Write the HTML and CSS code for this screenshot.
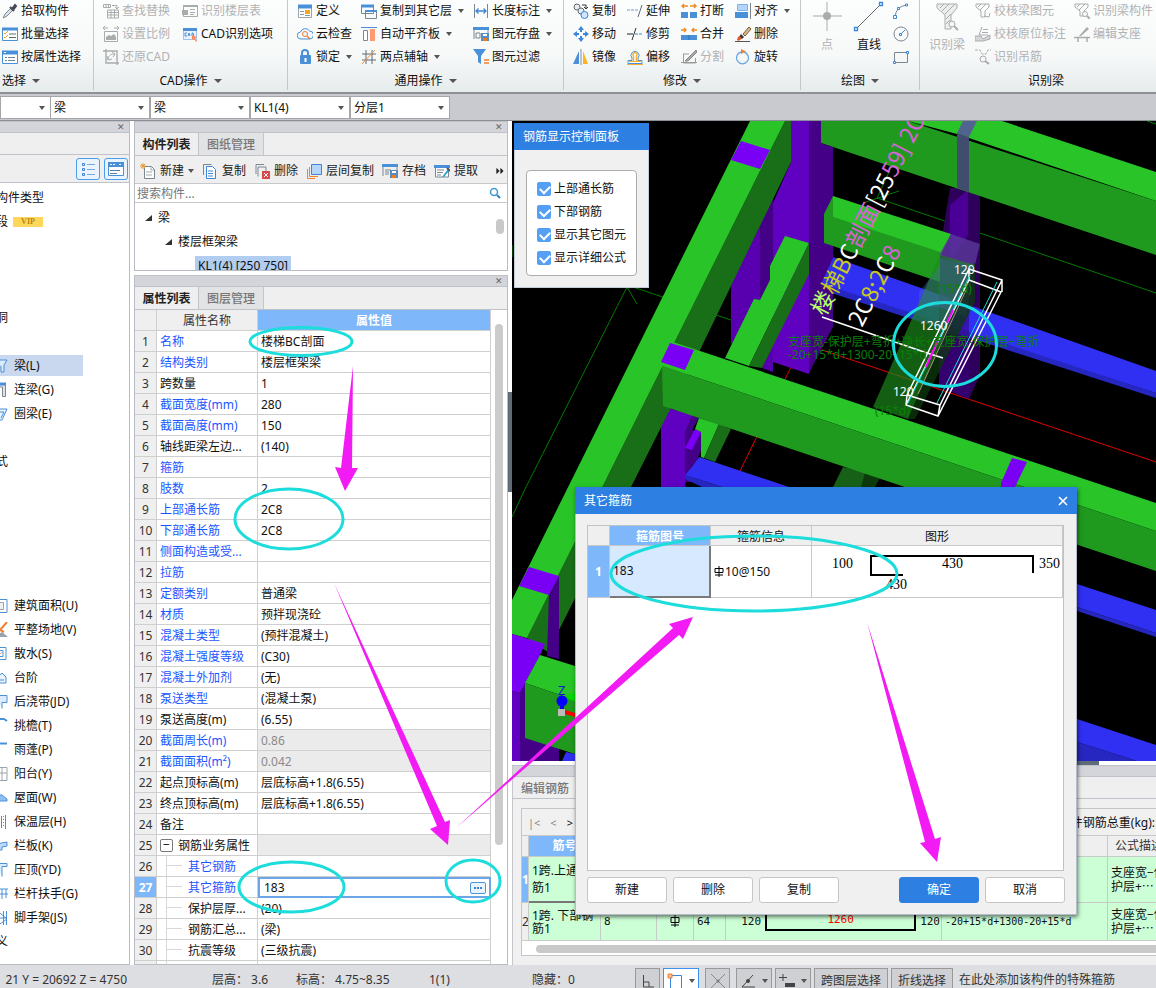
FILE: index.html
```html
<!DOCTYPE html>
<html lang="zh-CN">
<head>
<meta charset="utf-8">
<title>梁构件属性</title>
<link rel="stylesheet" href="styles.css">
</head>
<body>
<div class="app">
<header class="ribbon">
  <section class="group g-select">
    <div class="tools">
      <div class="col">
        <button class="tool"><svg viewBox="0 0 16 16"><path d="M1 15l2-4 6-6 2 2-6 6z" fill="#dce4ea" stroke="#7d8a94"/><path d="M8 4l4 4M10 6l3-4 1 1-3 4z" stroke="#444b52" stroke-width="2"/></svg>拾取构件</button>
        <button class="tool"><svg viewBox="0 0 16 16"><path d="M.5 3.500h15v11H.5z" fill="#fff" stroke="#4a90d9"/><path d="M0 3h16" stroke="#4a90d9" stroke-width="3"/><path d="M2 7l1 1 3-3M2 11l1 1 3-3" stroke="#f0a030" fill="none"/><path d="M7 8h7M7 11.500h7" stroke="#5f6b77"/></svg>批量选择</button>
        <button class="tool"><svg viewBox="0 0 16 16"><path d="M.5 2.500h15v12H.5z" fill="#fff" stroke="#4a90d9"/><path d="M0 3.500h16" stroke="#4a90d9" stroke-width="4"/><path d="M2 3l1 1 1-1" stroke="#fff"/><path d="M3 8.500h2M3 11.500h2M6 8.500h7M6 11.500h7" stroke="#6f8396"/></svg>按属性选择</button>
      </div>
    </div>
    <div class="caption">选择<i class="caret"></i></div>
  </section>
  <section class="group g-cad">
    <div class="tools">
      <div class="col">
        <button class="tool off" disabled><svg viewBox="0 0 16 16"><path d="M4.500 7v8h11V7zM4.500 9.500h11M4.500 12h11M8 7v8M11.500 7v8M9 2.500h5v3M12 4l2 2 2-2" fill="none" stroke="#a9abad"/><path d="M.5 1.500h7v3h-7zM3 1v4M5.500 1v4" fill="none" stroke="#a9abad"/></svg>查找替换</button>
        <button class="tool off" disabled><svg viewBox="0 0 16 16"><path d="M1.500 5.500h13v10h-13zM0 2h5M11 2h5M2 0L0 2l2 2M14 0l2 2-2 2" fill="none" stroke="#a9abad"/><path d="M3 14v-3l3-2 2 1 3-2 2 3v3z" fill="#a9abad"/></svg>设置比例</button>
        <button class="tool off" disabled><svg viewBox="0 0 16 16"><path d="M3 0v14h13M0 2h14v14" fill="none" stroke="#a9abad" stroke-width="1.400"/><path d="M5 10c1-4 3-5 7-5M4 7l1 4 4-1M9 3l3 2-2 3" fill="none" stroke="#a9abad"/></svg>还原CAD</button>
      </div>
      <div class="col">
        <button class="tool off" disabled><svg viewBox="0 0 16 16"><path d="M1.500 2.500h14v11h-14z" fill="none" stroke="#a9abad"/><path d="M1 3h15" stroke="#a9abad" stroke-width="2"/><path d="M0 7h6v5H0z" fill="#a9abad"/><path d="M8 6.500h5M8 9.500h5M8 11.500h4" stroke="#a9abad"/></svg>识别楼层表</button>
        <button class="tool"><svg viewBox="0 0 16 16"><path d="M1.500 2.500h13v11h-13z" fill="#eaf3fd" stroke="#9cc3ee"/><path d="M1 3.500h14" stroke="#4a90d9" stroke-width="3"/><path d="M5 7H3v3h2M6 10l1-3 1 3M10 7v3h1l1-1-1-2z" fill="none" stroke="#4a90d9"/><path d="M10 9l5 2-2 1 2 3-1 1-2-3-2 1z" fill="#ff8a60"/></svg>CAD识别选项</button>
      </div>
    </div>
    <div class="caption">CAD操作<i class="caret"></i></div>
  </section>
  <section class="group g-common">
    <div class="tools">
      <div class="col">
        <button class="tool"><svg viewBox="0 0 16 16"><path d="M1.500 2.500h13v12h-13z" fill="#fff" stroke="#98a4ae"/><path d="M1 3.500h14" stroke="#4a90d9" stroke-width="4"/><path d="M3 8.500h4M3 11.500h4M8 12.500h5" stroke="#8a98a5"/><path d="M8 7h5v4H8z" fill="#f5a623"/></svg>定义</button>
        <button class="tool"><svg viewBox="0 0 16 16"><path d="M4 13a3.500 3.500 0 0 1-.5-7 5 5 0 0 1 9-1 4 4 0 0 1 0 8z" fill="#f1f7ff" stroke="#4a90d9"/><circle cx="8" cy="8" r="2.500" fill="none" stroke="#f08030"/><path d="M10 10l3 3" stroke="#f08030" stroke-width="1.500"/></svg>云检查</button>
        <button class="tool"><svg viewBox="0 0 16 16"><path d="M5 7V4a3 3 0 0 1 6 0v3" fill="none" stroke="#4a90d9" stroke-width="2"/><rect x="3" y="6" width="11" height="9" rx="1" fill="#4a90d9"/><path d="M8.500 9v4" stroke="#fff" stroke-width="2"/></svg>锁定<i class="caret"></i></button>
      </div>
      <div class="col">
        <button class="tool"><svg viewBox="0 0 16 16"><path d="M.5 2.500h12v8H.5zM4.500 7.500h11v8h-11z" fill="#f7f9fb" stroke="#7a8793"/><path d="M0 3h13" stroke="#4a90d9" stroke-width="3"/><path d="M4 8h12" stroke="#4a90d9" stroke-width="2"/></svg>复制到其它层<i class="caret"></i></button>
        <button class="tool"><svg viewBox="0 0 16 16"><path d="M0 1.500h16" stroke="#4a90d9"/><path d="M2.500 4.500h4v10h-4z" fill="#fff" stroke="#7a8793"/><path d="M9 3h5v12H9z" fill="#ff9a70"/></svg>自动平齐板<i class="caret"></i></button>
        <button class="tool"><svg viewBox="0 0 16 16"><path d="M5 1v14M11 1v14M1 5h14M1 11h14" stroke="#5f6b77"/><path d="M1 15L14 1" stroke="#f09040"/></svg>两点辅轴<i class="caret"></i></button>
      </div>
      <div class="col">
        <button class="tool"><svg viewBox="0 0 16 16"><path d="M1.500 1v14M14.500 1v14" stroke="#7a8793"/><path d="M3 8h10M5.500 5.500L3 8l2.500 2.500M10.500 5.500L13 8l-2.500 2.500" fill="none" stroke="#3d85d8" stroke-width="1.300"/></svg>长度标注<i class="caret"></i></button>
        <button class="tool"><svg viewBox="0 0 16 16"><path d="M1 13V3h14v4M3 7h4v5H3z" fill="none" stroke="#7a8793"/><path d="M0 2.500h16" stroke="#4a90d9" stroke-width="3"/><path d="M8 7h8v8H8z" fill="#5b8cc0"/><path d="M10 8h4v2h-4z" fill="#fff"/><path d="M10 12h4v3h-4z" fill="#ef7b20"/></svg>图元存盘<i class="caret"></i></button>
        <button class="tool"><svg viewBox="0 0 16 16"><path d="M0 0h13L8 7v8l-3-2V7z" fill="#4a90d9"/><path d="M11 11h5M11 14h5" stroke="#f08030" stroke-width="1.300"/></svg>图元过滤</button>
      </div>
    </div>
    <div class="caption">通用操作<i class="caret"></i></div>
  </section>
  <section class="group g-modify">
    <div class="tools">
      <div class="col">
        <button class="tool"><svg viewBox="0 0 16 16"><circle cx="4" cy="4" r="3" fill="#e8edf1" stroke="#5f6b77"/><circle cx="8" cy="8" r="3" fill="#e8edf1" stroke="#5f6b77"/><circle cx="11.500" cy="12" r="3.500" fill="#cfe6ff" stroke="#3d85d8"/><path d="M9 2h4v4M11 4l2 2 2-2" fill="none" stroke="#333"/></svg>复制</button>
        <button class="tool"><svg viewBox="0 0 16 16"><path d="M8 0l3 4H5zM8 16l3-4H5zM0 8l4-3v6zM16 8l-4-3v6z" fill="#3d85d8"/><path d="M8 3v3M8 10v3M3 8h3M10 8h3" stroke="#3d85d8" stroke-width="2"/></svg>移动</button>
        <button class="tool"><svg viewBox="0 0 16 16"><path d="M6 2v13H0z" fill="#4a90d9"/><path d="M10 2v13h5z" fill="#f8b620"/><path d="M8 0v16" stroke="#8a8f94"/></svg>镜像</button>
      </div>
      <div class="col">
        <button class="tool"><svg viewBox="0 0 16 16"><path d="M0 7h11" stroke="#7a9cc8" stroke-dasharray="3 1"/><path d="M15 2l-4 12" stroke="#5f6b77"/></svg>延伸</button>
        <button class="tool"><svg viewBox="0 0 16 16"><path d="M0 8h6" stroke="#222"/><path d="M8 8h8" stroke="#3d85d8" stroke-dasharray="3 1"/><path d="M9 2L5 14" stroke="#333"/></svg>修剪</button>
        <button class="tool"><svg viewBox="0 0 16 16"><path d="M1 11.500h4V9a4 4 0 1 1 6 0v2.500h4v3H1z" fill="#fff" stroke="#4a90d9"/><path d="M6.500 12V7a2 2 0 1 1 3 0v5" fill="none" stroke="#f5b030" stroke-width="1.500"/><path d="M0 15.500h16M2 12.500h12" stroke="#f5b030"/></svg>偏移</button>
      </div>
      <div class="col">
        <button class="tool"><svg viewBox="0 0 16 16"><path d="M0 9h7v6H0zM9 9h7v6H9z" fill="#4a90d9"/><path d="M1 3h6M9 3h6M3 1L1 3l2 2M13 1l2 2-2 2" fill="none" stroke="#f08a24" stroke-width="1.400"/></svg>打断</button>
        <button class="tool"><svg viewBox="0 0 16 16"><path d="M0 9h16v5H0z" fill="#4a90d9"/><path d="M8 9v5" stroke="#2f6fb8"/><path d="M0 4h5M11 4h5M3 2l2 2-2 2M13 2l-2 2 2 2" fill="none" stroke="#f08a24" stroke-width="1.400"/></svg>合并</button>
        <button class="tool off" disabled><svg viewBox="0 0 16 16"><path d="M2.500 5v9h12V9M0 13.500h16M2 5h6" fill="none" stroke="#999"/><path d="M4 12L15 1l1 2-9 9z" fill="#aaa" stroke="#888"/></svg>分割</button>
      </div>
      <div class="col">
        <button class="tool"><svg viewBox="0 0 16 16"><path d="M2.500 1.500h10v6h-10z" fill="#b5d6fb" stroke="#7cb0ea"/><path d="M0 9h13v6H0z" fill="#4a90d9"/><path d="M15.500 0v16" stroke="#7a8793"/></svg>对齐<i class="caret"></i></button>
        <button class="tool"><svg viewBox="0 0 16 16"><path d="M8 8l6-7 2 2-6 7z" fill="#d9b98a" stroke="#7a5b35"/><path d="M6 8l3 3-2 2-3-2z" fill="#333"/><path d="M3 11c2-1 4 0 3 2s-3 2-4 1z" fill="#e4572e"/><path d="M0 15.500h15" stroke="#555"/></svg>删除</button>
        <button class="tool"><svg viewBox="0 0 16 16"><path d="M9 3a6 6 0 1 1-3 0" fill="none" stroke="#6aa6e4" stroke-width="1.300"/><path d="M6 0l5 2.500L6 5z" fill="#f08030"/></svg>旋转</button>
      </div>
    </div>
    <div class="caption">修改<i class="caret"></i></div>
  </section>
  <section class="group g-draw">
    <div class="tools">
      <button class="big off" disabled><svg viewBox="0 0 32 32"><path d="M16 2v29M2 16h29" stroke="#a9abad"/><circle cx="16" cy="16" r="4" fill="#a9abad"/></svg>点</button>
      <button class="big"><svg viewBox="0 0 32 32"><path d="M4 28L28 4" stroke="#5f6b77"/><path d="M1.500 27.500h3v3h-3zM26.500 2.500h3v3h-3z" fill="#fff" stroke="#3d85d8" stroke-width="1.300"/></svg>直线</button>
      <div class="col icons">
        <button class="tool" aria-label="弧线"><svg viewBox="0 0 16 16"><path d="M2 14Q3 3 14 2" fill="none" stroke="#7a8793"/><path d="M.5 12.500h3v3h-3zM4.500 4.500h2v2h-2zM12.500 1h2v2h-2z" fill="#fff" stroke="#3d85d8"/></svg></button>
        <button class="tool" aria-label="圆"><svg viewBox="0 0 16 16"><circle cx="8" cy="8" r="7" fill="none" stroke="#7a8793"/><path d="M8 8l4-4" stroke="#3d85d8"/><path d="M6.500 7.500h2v2h-2z" fill="#fff" stroke="#3d85d8"/></svg></button>
        <button class="tool" aria-label="矩形"><svg viewBox="0 0 16 16"><path d="M1.500 3.500h13v10h-13z" fill="none" stroke="#7a8793"/><path d="M.5 12.500h2v2h-2zM13.500 2.500h2v2h-2z" fill="#fff" stroke="#3d85d8"/></svg></button>
      </div>
    </div>
    <div class="caption">绘图<i class="caret"></i></div>
  </section>
  <section class="group g-recog">
    <div class="tools">
      <button class="big off" disabled><svg viewBox="0 0 32 32"><path d="M6 4h20v4l-6 7v14h-6V15L6 8z" fill="#eceeee" stroke="#a9abad"/><path d="M9 8l4-4M11 11l7-7M14 14L24 4M15 19l5-5M15 24l4-4" stroke="#a9abad"/><circle cx="21" cy="24" r="3" fill="#f5f6f6" stroke="#a9abad"/><path d="M23 26l4 4" stroke="#a9abad" stroke-width="2"/></svg>识别梁</button>
      <div class="col">
        <button class="tool off" disabled><svg viewBox="0 0 16 16"><path d="M1 1h13v3l-4 4v6H6V8L1 4zM3 4l3-3M5 7l6-6M9 13l5 1 1-4" fill="none" stroke="#a9abad"/></svg>校核梁图元</button>
        <button class="tool off" disabled><svg viewBox="0 0 16 16"><path d="M0 10h6l2 3 7-4v4l-7 2H0z" fill="#d4d6d7" stroke="#a9abad"/><path d="M7 1L4 9h9M8 3.500h5M7 6.500h6" fill="none" stroke="#a9abad"/></svg>校核原位标注</button>
        <button class="tool off" disabled><svg viewBox="0 0 16 16"><path d="M0 1h5l2 4h4l2-4h3" fill="none" stroke="#a9abad" stroke-dasharray="3 1"/><circle cx="8" cy="10" r="3" fill="none" stroke="#a9abad"/><path d="M10 12l4 3" stroke="#a9abad" stroke-width="2"/></svg>识别吊筋</button>
      </div>
      <div class="col">
        <button class="tool off" disabled><svg viewBox="0 0 16 16"><path d="M1 1h13v3l-4 4v5H6V8L1 4zM3 4l3-3M5 7l6-6" fill="none" stroke="#a9abad"/><circle cx="11" cy="11" r="2.500" fill="#fff" stroke="#a9abad"/><path d="M13 13l3 3" stroke="#a9abad" stroke-width="2"/></svg>识别梁构件</button>
        <button class="tool off" disabled><svg viewBox="0 0 16 16"><path d="M0 11.500h16M4 12v4M13 12v4" stroke="#a9abad" stroke-width="1.500"/><path d="M5 10L13 1l2 2-8 7z" fill="#a9abad"/></svg>编辑支座</button>
      </div>
    </div>
    <div class="caption">识别梁</div>
  </section>
</header>

<nav class="selectors">
  <label class="sel first"><select aria-label="楼层"><option></option></select></label>
  <label class="sel"><select aria-label="构件大类"><option>梁</option></select></label>
  <label class="sel"><select aria-label="构件类型"><option>梁</option></select></label>
  <label class="sel"><select aria-label="构件"><option>KL1(4)</option></select></label>
  <label class="sel"><select aria-label="分层"><option>分层1</option></select></label>
</nav>

<main class="work">
  <aside class="panel nav">
    <div class="bar"><button aria-label="关闭">✕</button></div>
    <div class="nav-head"></div>
    <div class="nav-tools">
      <button aria-label="列表"><svg viewBox="0 0 16 16"><path d="M2.500 2.500h2v2h-2zM2.500 7.500h2v2h-2zM2.500 12.500h2v2h-2z" fill="none" stroke="#3d85d8"/><path d="M7 3.500h8M7 8.500h8M7 13.500h8" stroke="#7aa9df"/></svg></button>
      <button aria-label="面板"><svg viewBox="0 0 16 16"><path d="M.5 2.500h15v12H.5z" fill="#fff" stroke="#4a90d9"/><path d="M0 3.500h16" stroke="#4a90d9" stroke-width="5"/><path d="M2 3.500h6M11 3.500h3" stroke="#fff" stroke-dasharray="2 1"/><path d="M2 9.500h10M2 12.500h7" stroke="#5f7f9f"/></svg></button>
    </div>
    <ul class="nav-list">
      <li><span class="cut wide">构件类型</span></li>
      <li><span class="cut">段</span><b class="vip">VIP</b></li>
      <li></li><li></li><li></li>
      <li><span class="cut">洞</span></li>
      <li></li>
      <li class="on"><svg viewBox="8 0 8 16"><path d="M6 2h9l-3 5v7h-3V8" fill="#dcebfb" stroke="#4a90d9"/></svg>梁(L)</li>
      <li><svg viewBox="8 0 8 16"><path d="M0 1.500h13.500v13h-3V5H0" fill="#dfe3e6" stroke="#7a8793"/><path d="M0 2h14" stroke="#4a90d9" stroke-width="3"/></svg>连梁(G)</li>
      <li><svg viewBox="8 0 8 16"><path d="M4 3h11l-5 11H6M8 6h4l-3 6" fill="#eaf3fd" stroke="#4a90d9"/></svg>圈梁(E)</li>
      <li></li>
      <li><span class="cut">式</span></li>
      <li></li><li></li><li></li><li></li><li></li>
      <li><svg viewBox="8 0 8 16"><path d="M2 1.500h13v13H2" fill="none" stroke="#4a90d9"/><path d="M2 4.500h9.500v7H2" fill="#eef1f4" stroke="#9aa5ae"/></svg>建筑面积(U)</li>
      <li><svg viewBox="8 0 8 16"><path d="M15 0L8 8l4 2" fill="none" stroke="#f08030" stroke-width="2"/><path d="M4 14l6-4 6 5H4z" fill="#9ba3aa"/></svg>平整场地(V)</li>
      <li><svg viewBox="8 0 8 16"><path d="M2 1.500h12v12H2" fill="none" stroke="#4a90d9"/><path d="M2 4.500h9v6H2" fill="none" stroke="#4a90d9"/><path d="M7 9l3-3" stroke="#f0a050"/></svg>散水(S)</li>
      <li><svg viewBox="8 0 8 16"><path d="M6 7l4-4 4 4v6H6M8 10h4" fill="#eaf3fd" stroke="#4a90d9"/></svg>台阶</li>
      <li><svg viewBox="8 0 8 16"><path d="M4 1.500h11v7h-5v6" fill="#dcebfb" stroke="#4a90d9"/></svg>后浇带(JD)</li>
      <li><svg viewBox="8 0 8 16"><path d="M4 1h8l3 2" fill="none" stroke="#4a90d9" stroke-width="2"/></svg>挑檐(T)</li>
      <li><svg viewBox="8 0 8 16"><path d="M4 1.500h11" stroke="#4a90d9" stroke-width="2"/></svg>雨蓬(P)</li>
      <li><svg viewBox="8 0 8 16"><path d="M4 1.500h11v13H4M4 7h11M10 1v13" fill="none" stroke="#9aa5ae"/></svg>阳台(Y)</li>
      <li><svg viewBox="8 0 8 16"><path d="M4 5h6l5 4v2H4z" fill="#8fc0f5" stroke="#4a90d9"/></svg>屋面(W)</li>
      <li><svg viewBox="8 0 8 16"><path d="M9.500 2v12M13.500 1v14" stroke="#4a90d9"/><path d="M11.500 2v12" stroke="#4a90d9" stroke-dasharray="1 2"/></svg>保温层(H)</li>
      <li><svg viewBox="8 0 8 16"><path d="M4 6l11-2v4l-5 1v3H6" fill="#bcdcff" stroke="#4a90d9"/></svg>栏板(K)</li>
      <li><svg viewBox="8 0 8 16"><path d="M4 1.500h11v3h-5v10" fill="#dcebfb" stroke="#4a90d9"/></svg>压顶(YD)</li>
      <li><svg viewBox="8 0 8 16"><path d="M4 3h12M10 3v10M14 3v9M6 8h10" fill="none" stroke="#4a90d9"/></svg>栏杆扶手(G)</li>
      <li><svg viewBox="8 0 8 16"><path d="M14.500 1v14M11.500 1v14M8 3l7 6-7 5M8 8h7" fill="none" stroke="#4a90d9"/></svg>脚手架(JS)</li>
      <li><span class="cut">义</span></li>
    </ul>
  </aside>

  <div class="middle">
    <section class="panel comp">
      <div class="bar"><button aria-label="关闭">✕</button></div>
      <div class="tabs"><button class="active">构件列表</button><button>图纸管理</button></div>
      <div class="comp-tools">
        <button><svg viewBox="0 0 16 16"><path d="M4.500 3.500h7l3 3v9h-10z" fill="#fff" stroke="#7a8793"/><path d="M11 4v3h3M6 9h6M6 12h6" fill="none" stroke="#a0a9b0"/><path d="M3 0v6M0 3h6M1 1l4 4M5 1L1 5" stroke="#f0982c"/></svg>新建<i class="caret"></i></button>
        <button><svg viewBox="0 0 16 16"><path d="M1.500 12V1.500h8" fill="none" stroke="#7a8793"/><path d="M4.500 3.500h6l3 3v9h-9z" fill="#fff" stroke="#3d85d8"/><path d="M6 8h5M6 10.500h5M6 13h5" stroke="#3d85d8"/></svg>复制</button>
        <button><svg viewBox="0 0 16 16"><path d="M2 11V1.500h8M4 13.500V4h8v4" fill="none" stroke="#7a8793"/><path d="M8 8h8v8H8z" fill="#d9494b"/><path d="M10 10l4 4M14 10l-4 4" stroke="#fff"/></svg>删除</button>
        <button><svg viewBox="0 0 16 16"><path d="M5.500 1.500h10v10h-10z" fill="#b5d6fb" stroke="#3d85d8"/><path d="M3.500 4v9.500H12M1.500 6v9.500H9" fill="none" stroke="#f08030"/></svg>层间复制</button>
        <button><svg viewBox="0 0 16 16"><path d="M1 13V3h14v4M3 7h6M3 9h4M3 11h4" fill="none" stroke="#7a8793"/><path d="M0 2.500h16" stroke="#4a90d9" stroke-width="3"/><path d="M8 7h8v8H8z" fill="#5b8cc0"/><path d="M10 8h4v2h-4z" fill="#fff"/><path d="M10 12h4v3h-4z" fill="#ef7b20"/></svg>存档</button>
        <button><svg viewBox="0 0 16 16"><path d="M1.500 3v11h13V3M3 7h7M3 9.500h6M3 12h4" fill="#fff" stroke="#7a8793"/><path d="M0 3.500h16" stroke="#4a90d9" stroke-width="3"/><path d="M8 14l6-8 1 2-5 6z" fill="#30a0d0"/><path d="M13 5l3 3" stroke="#555" stroke-width="2"/></svg>提取</button>
        <button class="more" aria-label="更多"><svg viewBox="0 0 10 8"><path d="M1 1l3 3-3 3zM6 1l3 3-3 3z" fill="#222" stroke="#222"/></svg></button>
      </div>
      <div class="search"><input type="text" aria-label="搜索构件" placeholder="搜索构件..."><svg viewBox="0 0 12 12"><circle cx="5" cy="5" r="3.500" fill="none" stroke="#3d9bd0" stroke-width="1.500"/><path d="M8 8l3 3" stroke="#2f7fb8" stroke-width="2"/></svg></div>
      <ul class="tree">
        <li class="l1"><i class="open"></i>梁</li>
        <li class="l2"><i class="open"></i>楼层框架梁</li>
        <li class="l3"><span>KL1(4) [250 750]</span></li>
        <li class="thumb"></li>
      </ul>
    </section>

    <section class="panel props">
      <div class="bar"><button aria-label="关闭">✕</button></div>
      <div class="tabs"><button class="active">属性列表</button><button>图层管理</button></div>
      <div class="props-body">
        <table class="ptable">
          <colgroup><col class="c-num"><col class="c-name"><col></colgroup>
          <thead><tr><th></th><th>属性名称</th><th class="hot">属性值</th></tr></thead>
          <tbody>
            <tr class="k"><th>1</th><td>名称</td><td>楼梯BC剖面</td></tr>
            <tr class="k"><th>2</th><td>结构类别</td><td>楼层框架梁</td></tr>
            <tr><th>3</th><td>跨数量</td><td>1</td></tr>
            <tr class="k"><th>4</th><td>截面宽度(mm)</td><td>280</td></tr>
            <tr class="k"><th>5</th><td>截面高度(mm)</td><td>150</td></tr>
            <tr><th>6</th><td>轴线距梁左边...</td><td>(140)</td></tr>
            <tr class="k"><th>7</th><td>箍筋</td><td></td></tr>
            <tr class="k"><th>8</th><td>肢数</td><td>2</td></tr>
            <tr class="k"><th>9</th><td>上部通长筋</td><td>2C8</td></tr>
            <tr class="k"><th>10</th><td>下部通长筋</td><td>2C8</td></tr>
            <tr class="k"><th>11</th><td>侧面构造或受...</td><td></td></tr>
            <tr class="k"><th>12</th><td>拉筋</td><td></td></tr>
            <tr class="k"><th>13</th><td>定额类别</td><td>普通梁</td></tr>
            <tr class="k"><th>14</th><td>材质</td><td>预拌现浇砼</td></tr>
            <tr class="k"><th>15</th><td>混凝土类型</td><td>(预拌混凝土)</td></tr>
            <tr class="k"><th>16</th><td>混凝土强度等级</td><td>(C30)</td></tr>
            <tr class="k"><th>17</th><td>混凝土外加剂</td><td>(无)</td></tr>
            <tr class="k"><th>18</th><td>泵送类型</td><td>(混凝土泵)</td></tr>
            <tr><th>19</th><td>泵送高度(m)</td><td>(6.55)</td></tr>
            <tr class="k ro"><th>20</th><td>截面周长(m)</td><td>0.86</td></tr>
            <tr class="k ro"><th>21</th><td>截面面积(m²)</td><td>0.042</td></tr>
            <tr><th>22</th><td>起点顶标高(m)</td><td>层底标高+1.8(6.55)</td></tr>
            <tr><th>23</th><td>终点顶标高(m)</td><td>层底标高+1.8(6.55)</td></tr>
            <tr><th>24</th><td>备注</td><td></td></tr>
            <tr class="ro"><th>25</th><td><button class="fold" aria-label="折叠">−</button>钢筋业务属性</td><td></td></tr>
            <tr class="k sub"><th>26</th><td>其它钢筋</td><td></td></tr>
            <tr class="k sub cur"><th>27</th><td>其它箍筋</td><td><div class="edit"><input type="text" aria-label="其它箍筋" value="183"><button aria-label="选择"><svg viewBox="0 0 14 10"><path d="M3 5h2M6 5h2M9 5h2" stroke="#3d85d8" stroke-width="2"/></svg></button></div></td></tr>
            <tr class="sub"><th>28</th><td>保护层厚...</td><td>(20)</td></tr>
            <tr class="sub"><th>29</th><td>钢筋汇总...</td><td>(梁)</td></tr>
            <tr class="sub"><th>30</th><td>抗震等级</td><td>(三级抗震)</td></tr>
            <tr class="sub"><th></th><td></td><td></td></tr>
          </tbody>
        </table>
        <div class="gutter"><i></i></div>
      </div>
    </section>
  </div>

  <div class="right">
    <div class="view">
      <svg class="scene" viewBox="512 121 644 640" preserveAspectRatio="xMinYMin slice">
        <rect x="512" y="121" width="644" height="640" fill="#000"/>
        <g fill="none" stroke="#007a00"><path d="M627 287L525 489 512 517M627 287l10 17M630 286l101 34M877 198l279 95M863 203l36-12M877 198l19-41M1147 121l9 3M512 245v12"/></g>
        <path d="M791 367l-51 104M822 350l334 112" stroke="#e00000" fill="none"/>
        <path d="M950 188h30v187l-11 24-30-12V255z" fill="#2e005c"/>
        <path d="M950 205l18-15v45l-18 28z" fill="#4a0096"/>
        <path d="M833 257L1156 371v22L815 285z" fill="#3030f3"/>
        <path d="M820 283l336 110v5L822 290z" fill="#2626c0"/>
        <path d="M939 257h30v142l-30-12z" fill="#3a0080" opacity=".55"/>
        <path d="M833 196l118 38-11 23-116-43z" fill="#28c428"/>
        <path d="M824 214l116 38v30l-116-39z" fill="#20991f"/>
        <path d="M951 234l29 10-6 25-35-14z" fill="#5a3a9a" opacity=".8"/>
        <path d="M940 255l35 10-67 154-35-12z" fill="#1c8a1c" opacity=".68"/>
        <path d="M939 257l35 10-8 50-27-10-20 0 0-15 20-25z" fill="#4a70c0" opacity=".32"/>
        <path d="M975 262v40l-60 117h-7z" fill="#0c3a0c" opacity=".75"/>
        <path d="M908 121h94l154 51v29L957 134z" fill="#28c428"/>
        <path d="M821 121h87l248 80v54L821 143z" fill="#20991f"/>
        <path d="M963 121h14l-8 16-12-4z" fill="#52638f"/><path d="M957 133l12 4v55l-12-4z" fill="#404d6e"/>
        <path d="M809 121h12v22l12 4v180l-24 46z" fill="#440086"/>
        <path d="M833 196l-9 18v29l9 3z" fill="#20991f"/>
        <path d="M833 258l-12 26 12 4z" fill="#3030f3"/>
        <path d="M791 121h18v253l-36-12V203l18-41z" fill="#6000c0"/>
        <path d="M731 285l29-59v74l-29 45zM762 368l11-23v27z" fill="#5800b0"/>
        <path d="M770 150l3 55v80l-13 20V169z" fill="#440086"/>
        <path d="M785 236l24 7-60 123-24-8 29-59 6 1 10-20v-14z" fill="#28c428"/>
        <path d="M809 243v31l-47 94-13-2z" fill="#186f18"/>
        <path d="M661 406l31 9v15l-7 57h-24z" fill="#6000c0"/>
        <path d="M692 415l7 3-7 12 9 2v18l-7 17v15h-9v-50z" fill="#440086"/>
        <path d="M695 429l6 3-9 18-7-2z" fill="#7a00f5"/>
        <path d="M699 418l20 6-15 34-3-1v-25l-6-3z" fill="#28c428"/>
        <path d="M719 424l12 5-16 33-11-4z" fill="#186f18"/>
        <path d="M699 457l90 30h-67l-37-12 7-8z" fill="#3030f3"/><path d="M685 475l37 12h-20l-17-8z" fill="#2626c0"/>
        <path d="M785 121h6v41L700 350 559 630l-11 22-21-14z" fill="#186f18"/>
        <path d="M750 121h35L527 638l-15-4v-34z" fill="#28c428"/>
        <path d="M741 141l29 9-10 19-29-9zM529 567l30 9-10 19-30-9z" fill="#7a00f5"/>
        <path d="M549 595l10-19v83l-12-3z" fill="#440086"/>
        <path d="M843 467l35 7-13 13h-32z" fill="#176017"/><path d="M865 473l15 5-5 9h-14z" fill="#0c3a0c"/>
        <path d="M670 341l486 162v28L662 366z" fill="#28c428"/>
        <path d="M662 366l494 165v40L663 406z" fill="#20991f"/>
        <path d="M670 343l24 7-9 20-24-8zM1012 458l15 4-12 25h-14v-4z" fill="#7a00f5"/>
        <path d="M512 634l33 10-5 11-20 38-8-2z" fill="#7a00f5"/><path d="M512 691l8 2v68h-8z" fill="#6000c0"/>
        <path d="M520 693l5-10v55l34 5v18h-39z" fill="#440086"/>
        <path d="M540 655l35 11v34l-50-17z" fill="#28c428"/><path d="M525 683l50 17v54l-50-16z" fill="#20991f"/>
        <path d="M566 752l9 2v7h-13zM1077 584l79 26v23l-79-26zM1077 719l79 26v16h-19l-60-19z" fill="#3030f3"/>
        <path d="M1077 607l79 26v4l-79-26zM1077 742l60 19h-60z" fill="#2626c0"/>
        <path d="M572 678l3 6M575 693l-10 4 10 4z" fill="#00d800" stroke="#00d800"/>
        <circle cx="562" cy="701" r="5.500" fill="#00f"/><path d="M562 702v9" stroke="#00f" stroke-width="4"/><path d="M558 709h7v7h-7z" fill="#bbb"/><path d="M565 710l10 3v4l-10-3z" fill="#f00"/>
        <text x="558" y="695" fill="#1616d8" font-size="13">Z</text>
        <g fill="none" stroke="#fff" stroke-width="1.500"><path d="M969 269l33 11-62 125-33-10zM906 405l32 11 63-124-32-12zM969 269v11M1002 280v12M940 405l-2 11M907 395l-1 10"/><path d="M822 317l105 36 16 5"/></g>
        <path d="M970 275l-62 128M997 282l-60 121" stroke="#16e0e0" fill="none"/><path d="M966 290l-48 104" stroke="#b09080" fill="none"/>
        <path d="M953 310l-6 13M938 340l-12 27" stroke="#f0f" stroke-width="2"/>
        <g fill="#088008" font-size="12"><text x="788" y="346">支座宽-保护层+弯折+净长+支座宽-保护层+弯折</text><text x="788" y="359">-20+15*d+1300-20+15*d</text><text x="937" y="293">(15*d)</text><text x="875" y="415">(15*d)</text></g>
        <g fill="#fff" font-size="12"><text x="954" y="274">120</text><text x="920" y="330">1260</text><text x="893" y="396">120</text></g>
        <g class="tag"><text transform="translate(825 317) rotate(-63)"><tspan fill="#b4ff6a">楼</tspan><tspan fill="#c8c820">梯B</tspan><tspan fill="#fff">C</tspan><tspan fill="#d863d8">剖面</tspan><tspan fill="#fff">[25</tspan><tspan fill="#d863d8">59] 2C8</tspan></text>
        <text transform="translate(862 328) rotate(-63)"><tspan fill="#fff">2C</tspan><tspan fill="#c8c820">8;2</tspan><tspan fill="#fff">C</tspan><tspan fill="#d863d8">8</tspan></text></g>
      </svg>
      <div class="float">
        <h2>钢筋显示控制面板</h2>
        <div class="checks">
          <label><input type="checkbox" checked>上部通长筋</label>
          <label><input type="checkbox" checked>下部钢筋</label>
          <label><input type="checkbox" checked>显示其它图元</label>
          <label><input type="checkbox" checked>显示详细公式</label>
        </div>
      </div>
      <i class="grip"></i><i class="grip-h"></i>
    </div>
    <section class="rebar">
      <div class="bar"></div>
      <div class="tabs"><button>编辑钢筋</button></div>
      <div class="rebar-box">
        <div class="pager"><button disabled>|&lt;</button><button disabled>&lt;</button><button>&gt;</button><span>单构件钢筋总重(kg):</span></div>
        <table class="rtable">
          <colgroup><col class="r1"><col class="r2"><col class="r3"><col class="r4"><col class="r5"><col class="r6"><col class="r7"><col></colgroup>
          <thead><tr><th></th><th class="hot">筋号</th><th></th><th></th><th></th><th></th><th></th><th class="desc">公式描述</th></tr></thead>
          <tbody>
            <tr class="first"><th>1</th><td>1跨.上通长筋1</td><td></td><td></td><td></td><td></td><td></td><td>支座宽−保护层+⋯</td></tr>
            <tr class="second"><th>2</th><td>1跨. 下部钢筋1</td><td class="m">8</td><td class="sym"><svg viewBox="0 0 10 12"><path d="M5 0v12M1 2.500h8v5H1zM1 10h8" fill="none" stroke="#000"/></svg></td><td class="m">64</td><td><div class="shape"><span>120</span><b>1260</b><span>120</span></div></td><td class="m f">-20+15*d+1300-20+15*d</td><td>支座宽−保护层+⋯</td></tr>
          </tbody>
        </table>
        <div class="hscroll"><i></i></div>
      </div>
    </section>
  </div>
</main>

<footer class="status">
  <div class="stats"><span class="s1">21 Y = 20692 Z = 4750</span><span class="s2">层高： 3.6</span><span class="s3">标高： 4.75~8.35</span><span class="s4">1(1)</span><span>隐藏：0</span></div>
  <div class="modes">
    <div class="set">
      <button class="ic" aria-label="正交"><svg viewBox="0 0 16 16"><path d="M3.500 2v12H14M4 9h5v5" fill="none" stroke="#444"/></svg></button>
      <button class="ic dd on" aria-label="选择模式"><svg viewBox="0 0 16 16"><path d="M3.500 2.500h11v13h-11z" fill="#fff" stroke="#3d85d8"/><path d="M1 1h4v4H1z" fill="#ffb890" stroke="#f08030"/></svg><i class="caret"></i></button>
    </div>
    <button class="ic" aria-label="交点"><svg viewBox="0 0 16 16"><path d="M1 1l14 14M15 1L1 15" stroke="#888"/><circle cx="8" cy="8" r="1.500" fill="#777"/></svg></button>
    <div class="set">
      <button class="ic dd" aria-label="角度"><svg viewBox="0 0 16 16"><path d="M13 2L2 14h13" fill="none" stroke="#444"/><circle cx="8" cy="8" r="2" fill="#444"/></svg><i class="caret"></i></button>
      <button class="ic dd" aria-label="偏移输入"><svg viewBox="0 0 16 16"><path d="M4 1v7M0 4.500h8" stroke="#444"/><path d="M6 10h10v4H6z" fill="#444"/></svg><i class="caret"></i></button>
      <button>跨图层选择</button><button>折线选择</button><span>在此处添加该构件的特殊箍筋</span>
    </div>
  </div>
</footer>

<div class="dialog" role="dialog" aria-label="其它箍筋">
  <div class="title"><h2>其它箍筋</h2><button aria-label="关闭"><svg viewBox="0 0 10 10"><path d="M1 1l8 8M9 1L1 9" stroke="#fff" stroke-width="1.600"/></svg></button></div>
  <div class="sheet">
    <table class="dtable">
      <colgroup><col class="d1"><col class="d2"><col class="d2"><col></colgroup>
      <thead><tr><th></th><th class="hot">箍筋图号</th><th>箍筋信息</th><th>图形</th></tr></thead>
      <tbody><tr><th>1</th><td class="picked">183</td><td><div class="info"><svg viewBox="0 0 10 12"><path d="M5 0v11M1 2.500h8v4H1zM1 9h8" fill="none" stroke="#000"/></svg>10@150</div></td>
      <td class="fig"><svg viewBox="0 0 252 50" preserveAspectRatio="xMidYMid slice"><path d="M92 28H60V9h162v17" fill="none" stroke="#000" stroke-width="2"/><text x="21" y="21">100</text><text x="131" y="21">430</text><text x="228" y="21">350</text><text x="75" y="42">430</text></svg></td></tr></tbody>
    </table>
  </div>
  <div class="actions"><button>新建</button><button>删除</button><button>复制</button><span></span><button class="primary">确定</button><button>取消</button></div>
</div>

<svg class="marks" width="1156" height="988" viewBox="0 0 1156 988">
  <g fill="none" stroke="#1cdcdc" stroke-width="3"><ellipse cx="301" cy="341.500" rx="51" ry="14"/><ellipse cx="289" cy="519" rx="54" ry="30"/><ellipse cx="291.500" cy="887" rx="52.500" ry="25"/><ellipse cx="473" cy="881" rx="27" ry="21"/><ellipse cx="945" cy="344.500" rx="51.500" ry="42"/><ellipse cx="754" cy="573.500" rx="143" ry="37.500"/></g>
  <g fill="#f31bf3"><path d="M353 366l-1 102 6 0-13 23-10-24 6 1zM334 583l111 239 5-2-2 25-18-16 7-3zM456 828L673 628l-4-4 24-7-10 22-4-4zM867 622l68 217 6-2-4 25-17-19 5-1z"/></g>
</svg>
</div>
</body>
</html>
```
FILE: styles.css
```css
* { box-sizing: border-box; }
body { margin: 0; font: 12px/16px "Noto Sans", "Noto Sans CJK SC", sans-serif; color: #111; background: #fff; }
button, input, select { font: inherit; color: inherit; }
button { margin: 0; padding: 0; border: 0; background: none; white-space: nowrap; }
h2 { margin: 0; font-size: 12px; font-weight: 400; }
ul { margin: 0; padding: 0; list-style: none; }
table { border-collapse: separate; border-spacing: 0; table-layout: fixed; }
th, td { padding: 0; font-weight: 400; overflow: hidden; white-space: nowrap; }
.app { position: relative; height: 100vh; display: grid; grid-template-rows: 94px 27px minmax(0, 1fr) 23px; overflow: hidden; }
.caret { flex: none; width: 0; height: 0; border: 3px solid transparent; border-top: 4px solid #555; border-bottom: 0; }

/* ribbon */
.ribbon { display: flex; overflow: hidden; border-bottom: 2px solid #8e9194; background: linear-gradient(#fcfdfd, #f7f9f9 60%, #e6ebeb); }
.group { flex: none; height: 90px; border-right: 1px solid #c4c8ca; }
.tools { display: flex; height: 67px; }
.col { display: grid; grid-template-rows: repeat(3, 21px); gap: 2px; align-content: start; }
.tool { display: flex; align-items: center; gap: 3px; }
.tool svg { width: 16px; height: 16px; flex: none; }
.tool .caret { margin-left: 3px; }
.off { color: #b0b2b4; }
.caption { display: flex; align-items: center; justify-content: center; gap: 6px; height: 28px; }
.caption .caret { border-width: 4px 4px 0; }
.g-select { width: 94px; padding-left: 2px; }
.g-select .caption { justify-content: flex-start; }
.g-cad { width: 194px; }
.g-cad .tools { padding-left: 9px; gap: 12px; }
.g-common { width: 276px; }
.g-common .tools { padding-left: 9px; gap: 9px; }
.g-modify { width: 237px; }
.g-modify .tools { padding-left: 9px; gap: 11px; }
.g-draw { width: 119px; }
.g-draw .tools { padding-left: 6px; gap: 2px; }
.g-recog { width: 252px; border: 0; }
.g-recog .tools { padding-left: 7px; gap: 8px; }
.big { width: 40px; display: flex; flex-direction: column; align-items: center; gap: 5px; }
.big svg { width: 32px; height: 32px; }
.icons { padding-left: 2px; }

/* selector bar */
.selectors { display: flex; padding: 2px 0 1px; background: #c8cad0; border-bottom: 1px solid #8a8f96; }
.sel { position: relative; width: 100px; }
.sel.first { width: 51px; margin-right: -1px; }
.sel select { display: block; width: 100%; height: 23px; padding: 0 3px; appearance: none; border: 1px solid #a4a6aa; border-radius: 0; background: #fff; }
.sel::after { content: ""; position: absolute; right: 6px; top: 10px; border: 3px solid transparent; border-top: 4px solid #555; border-bottom: 0; }

/* docked panels */
.work { display: grid; grid-template-columns: 130px 374px minmax(0, 1fr); gap: 4px; min-height: 0; }
.panel { display: flex; flex-direction: column; min-height: 0; border: solid #b9bcc4; border-width: 0 1px 1px; background: #efefef; }
.bar { flex: none; height: 12px; display: flex; justify-content: flex-end; align-items: center; padding-right: 4px; background: #d4d5db; border: solid #bfc2c9; border-width: 1px 0; }
.bar button { font-size: 9px; line-height: 10px; color: #666; }
.tabs { flex: none; height: 23px; display: flex; background: #efefef; border-bottom: 1px solid #bfc2c9; }
.tabs button { width: 65px; padding-top: 2px; color: #777; font-weight: 500; background: #e2e3e5; border-right: 1px solid #c4c6cc; }
.tabs .active { width: 64px; color: #222; font-weight: 700; background: #efefef; }
.nav { border-left: 0; background: #fff; }
.nav-head { height: 22px; flex: none; background: #efefef; border-bottom: 1px solid #bfc2c9; }
.nav-tools { height: 28px; flex: none; display: flex; gap: 4px; justify-content: flex-end; padding: 3px 1px; background: #efefef; border-bottom: 1px solid #bfc2c9; }
.nav-tools button { width: 24px; height: 22px; padding: 2px 3px; border: 1px solid #4a9cec; border-radius: 3px; background: #eaf4ff; }
.nav-tools svg { display: block; width: 16px; height: 16px; }
.nav-list { padding-top: 3px; overflow: hidden; }
.nav-list li { height: 24px; display: flex; align-items: center; white-space: nowrap; }
.nav-list .on { width: 83px; height: 21px; margin: 1px 0 2px; background: #c9d8ef; }
.nav-list svg { width: 8px; height: 16px; margin-right: 6px; }
.cut { width: 8px; display: flex; justify-content: flex-end; overflow: hidden; }
.cut.wide { width: 44px; }
.vip { width: 30px; height: 10px; margin-left: 5px; background: #ffd75a; color: #b8861c; font: 700 8px/10px "Liberation Serif", serif; text-align: center; }
.middle { display: grid; grid-template-rows: 150px minmax(0, 1fr); gap: 4px; min-height: 0; }
.comp-tools { flex: none; height: 28px; display: flex; align-items: center; padding: 2px 3px 0 5px; border-bottom: 1px solid #c6c8cd; color: #222; }
.comp-tools button { display: flex; align-items: center; gap: 4px; margin-right: 8px; }
.comp-tools svg { width: 16px; height: 16px; }
.comp-tools .more { margin: 0 0 0 auto; }
.comp-tools .more svg { width: 8px; height: 8px; }
.search { flex: none; height: 19px; display: flex; align-items: center; padding-right: 6px; background: #fff; border-bottom: 1px solid #c6c8cd; }
.search input { flex: 1; min-width: 0; height: 18px; padding: 0 2px; border: 0; outline: 0; }
.search input::placeholder { color: #777; opacity: 1; }
.search svg { width: 12px; height: 12px; }
.tree { position: relative; flex: 1; padding-top: 3px; background: #fff; overflow: hidden; }
.tree li { height: 24px; display: flex; align-items: center; gap: 6px; }
.l1 { padding-left: 10px; }
.l2 { padding-left: 30px; }
.l3 { padding-left: 60px; }
.l3 span { padding: 0 3px; line-height: 20px; background: #b1cdf0; }
.open { width: 0; height: 0; border: solid transparent; border-width: 0 0 6px 7px; border-bottom-color: #333; }
.tree .thumb { position: absolute; right: 3px; top: 16px; width: 8px; height: 15px; border-radius: 4px; background: #c9c9c9; }

/* property table */
.props-body { flex: 1; display: flex; align-items: flex-start; min-height: 0; overflow: hidden; background: #fff; }
.ptable { flex: 1; width: 100%; }
.c-num { width: 22px; }
.c-name { width: 101px; }
.ptable th, .ptable td { height: 21px; padding-top: 2px; border: solid #cfcfcf; border-width: 0 1px 1px 0; line-height: 18px; }
.ptable th { background: #efefef; color: #333; }
.ptable td { padding-left: 3px; }
.ptable .hot, .rtable .hot, .dtable .hot { background: #7fb8fa; color: #fff; font-weight: 600; }
.k td:nth-child(2) { color: #1a56ff; }
.ro td:last-child { background: #ebebeb; color: #8a8a8a; }
.sub td:nth-child(2) { padding-left: 31px; background: linear-gradient(#d8d8d8, #d8d8d8) 9px 9px / 16px 1px no-repeat, linear-gradient(#d8d8d8, #d8d8d8) 9px 0 / 1px 100% no-repeat; }
.fold { width: 13px; height: 13px; margin-right: 5px; border: 1px solid #777; border-radius: 2px; line-height: 10px; vertical-align: 1px; background: #fff; }
.ptable .cur th { background: #7fb8fa; color: #fff; font-weight: 700; }
.ptable .cur td:last-child { padding: 0; border: 0; }
.edit { display: flex; align-items: center; height: 21px; padding-right: 3px; border: 2px solid #6ba6e8; background: #fff; }
.edit input { flex: 1; min-width: 0; height: 17px; padding: 1px 4px 0; border: 0; outline: 0; }
.edit button { width: 16px; height: 12px; border: 1px solid #4f93d8; border-radius: 2px; background: #eaf4ff; }
.edit svg { display: block; width: 14px; height: 10px; }
.gutter { flex: none; width: 16px; align-self: stretch; padding: 14px 4px 0; }
.gutter i { display: block; height: 521px; border-radius: 4px; background: #cbcbcb; }

/* model view */
.right { display: grid; grid-template-rows: minmax(0, 1fr) 200px; gap: 4px; min-height: 0; }
.view { position: relative; min-height: 0; background: #000; }
.scene { display: block; width: 100%; height: 100%; }
.tag { font-size: 23px; font-family: "Noto Sans CJK SC", sans-serif; }
.grip { position: absolute; left: -4px; top: 271px; width: 4px; height: 100px; background: #5f6b77; }
.grip-h { position: absolute; right: 57px; bottom: -4px; width: 100px; height: 4px; background: #5f6b77; }
.float { position: absolute; left: 2px; top: 2px; width: 135px; padding-bottom: 11px; background: #f0f0f0; border: 1px solid #c4cbd8; border-top: 0; }
.float h2 { margin: 0 -1px; padding-left: 9px; line-height: 27px; background: #2d7fe1; color: #fff; }
.checks { margin: 20px 11px 0; padding: 6px 10px; display: grid; border: 1px solid #adadad; border-radius: 4px; background: #fff; }
.checks label { height: 23px; display: flex; align-items: center; gap: 3px; white-space: nowrap; }
.checks input { flex: none; position: relative; width: 14px; height: 14px; margin: 0; appearance: none; border-radius: 2px; background: #559ff5; }
.checks input::after { content: ""; position: absolute; left: 3px; top: 3px; width: 8px; height: 5px; border: solid #fff; border-width: 0 0 2px 2px; transform: rotate(-45deg); }

/* rebar editor */
.rebar { display: flex; flex-direction: column; min-width: 0; background: #f0f0f0; border-left: 1px solid #c4c6cc; }
.rebar .tabs { height: 22px; }
.rebar .tabs button { background: #efefef; }
.rebar-box { flex: 1; margin: 9px 0 9px 8px; border: 1px solid #c4c6cc; border-right: 0; background: #fff; overflow: hidden; }
.pager { height: 27px; display: flex; align-items: center; gap: 10px; padding: 2px 1px 0 6px; background: #f0f0f0; border-bottom: 1px solid #c8c8c8; color: #111; }
.pager button:disabled { color: #888; }
.pager button { font-size: 11px; }
.pager span { margin-left: auto; }
.rtable { width: max(100%, 680px); }
.r1 { width: 7px; } .r2 { width: 72px; } .r3 { width: 56px; } .r4 { width: 37px; } .r5 { width: 32px; } .r6 { width: 216px; } .r7 { width: 166px; }
.rtable th, .rtable td { border: solid #c8ccc8; border-width: 0 1px 1px 0; }
.rtable th { background: #efefef; color: #333; }
.rtable thead th { height: 21px; line-height: 18px; }
.rtable .desc { padding-left: 7px; text-align: left; }
.rtable td { padding: 0 3px; background: #ccffd6; white-space: normal; vertical-align: middle; word-break: break-all; }
.rtable td:last-child { padding-right: 25px; line-height: 14px; }
.first td, .first th { height: 46px; line-height: 17px; }
.first td:nth-child(2) { border-bottom: 2px solid #777; }
.rtable .first th { background: #7fb8fa; color: #fff; font-weight: 700; }
.second td, .second th { height: 38px; line-height: 13px; }
.rtable .m, .shape { font-family: "DejaVu Sans Mono", monospace; font-size: 11px; }
.rtable .f { font-size: 10px; }
.sym { text-align: center; }
.sym svg { width: 10px; height: 12px; }
.shape { display: flex; align-items: center; justify-content: flex-end; gap: 4px; margin: 0 -2px 0 0; line-height: 14px; }
.shape b { flex: 1; max-width: 151px; height: 18px; border: solid #000; border-width: 0 2px 2px; color: #f00; font-weight: 400; text-align: center; }
.hscroll { height: 14px; padding: 4px 0 0 14px; }
.hscroll i { display: block; height: 8px; border-radius: 4px 0 0 4px; background: #c9c9c9; }

/* status bar */
.status { display: flex; padding-top: 3px; background: #dddee1; line-height: 24px; color: #333; overflow: hidden; white-space: nowrap; }
.stats { flex: none; width: 635px; display: flex; }
.s1 { width: 127px; margin-right: 85px; display: flex; justify-content: flex-end; overflow: hidden; white-space: pre; }
.s2 { width: 84px; } .s3 { width: 133px; } .s4 { width: 103px; }
.modes { display: flex; gap: 6px; }
.set { display: flex; gap: 3px; }
.modes button { height: 26px; padding: 0 6px; display: flex; align-items: center; border: 1px solid #999; background: #cfd0d3; }
.modes svg { flex: none; width: 16px; height: 16px; }
.modes .ic { width: 25px; padding: 0 4px; }
.modes .dd { width: 36px; padding: 0 3px; gap: 6px; }
.modes .on { background: #fff; border-color: #3d92f0; }
.modes span { margin-left: 3px; }

/* stirrup dialog */
.dialog { position: absolute; left: 575px; top: 487px; width: 502px; height: 428px; display: flex; flex-direction: column; background: #f0f0f0; border: 1px solid #b4bccc; border-top: 0; box-shadow: 1px 2px 4px #0008; }
.title { flex: none; height: 27px; margin: 0 -1px; padding: 0 9px; display: flex; align-items: center; justify-content: space-between; background: #2d7fe1; color: #fff; }
.title svg { display: block; width: 10px; height: 10px; }
.sheet { flex: 1; margin: 11px 12px 6px 11px; border: 1px solid #bfc2c6; background: #fff; overflow: hidden; }
.dtable { width: 100%; }
.d1 { width: 22px; } .d2 { width: 101px; }
.dtable th, .dtable td { border: solid #c8c8c8; border-width: 0 1px 1px 0; }
.dtable thead th { height: 20px; padding-top: 2px; line-height: 17px; background: #efefef; }
.dtable tbody th { height: 52px; background: #7fb8fa; color: #fff; font-weight: 700; }
.dtable td { padding: 0 3px; }
.dtable .picked { background: #d6e9ff; border: solid #7a7a7a; border-width: 0 2px 2px 0; }
.info { display: flex; align-items: center; gap: 1px; }
.info svg { width: 10px; height: 12px; }
.dtable .fig { padding: 0; }
.fig svg { display: block; width: 100%; height: 50px; font: 14px "Liberation Serif", serif; }
.actions { flex: none; display: flex; gap: 6px; padding: 0 11px 11px; }
.actions span { flex: 1; }
.actions button { width: 80px; height: 26px; background: #fff; border: 1px solid #c6c6c6; border-radius: 3px; }
.actions .primary { background: #2d7fe1; border-color: #2d7fe1; color: #fff; }
.marks { position: absolute; left: 0; top: 0; pointer-events: none; }
```
